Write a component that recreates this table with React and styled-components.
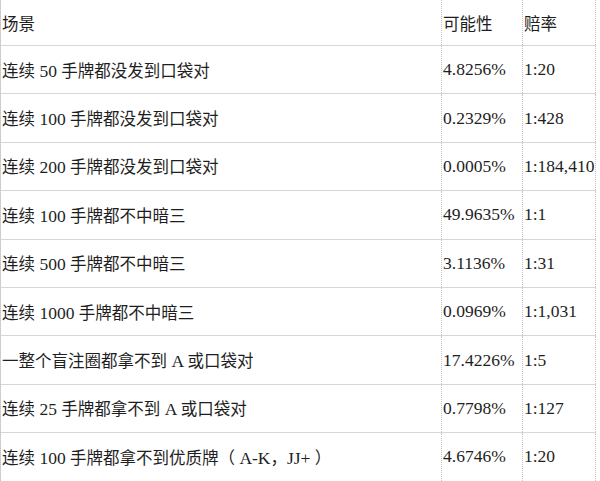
import styled, { createGlobalStyle } from 'styled-components'
import { Fragment } from 'react'

const Global = createGlobalStyle`
  html, body { margin: 0; padding: 0; background: #fff; }
  body { width: 600px; height: 481px; overflow: hidden; }
`

const Table = styled.div`
  display: grid;
  grid-template-columns: 441px 81px 73px;
  grid-template-rows: 45px repeat(9, 47.4px);
  row-gap: 1px;
  background: #d6d6d6;
  border-left: 1px dotted #c4c4c4;
  width: 596px;
  box-sizing: border-box;
  font-family: "Liberation Serif", "Noto Sans CJK SC", serif;
  font-size: 17.5px;
  color: #1e1e1e;
`

const Cell = styled.div`
  background: #fff;
  display: flex;
  align-items: center;
  padding-left: 1px;
  white-space: pre;
  border-right: 1px dotted #c4c4c4;
`

const Text = styled.span`
  white-space: pre;
`

const Cjk = styled.span`
  font-family: "Noto Sans CJK SC", sans-serif;
  font-size: 16.5px;
`

const rows = [
  ['连续 50 手牌都没发到口袋对', '4.8256%', '1:20'],
  ['连续 100 手牌都没发到口袋对', '0.2329%', '1:428'],
  ['连续 200 手牌都没发到口袋对', '0.0005%', '1:184,410'],
  ['连续 100 手牌都不中暗三', '49.9635%', '1:1'],
  ['连续 500 手牌都不中暗三', '3.1136%', '1:31'],
  ['连续 1000 手牌都不中暗三', '0.0969%', '1:1,031'],
  ['一整个盲注圈都拿不到 A 或口袋对', '17.4226%', '1:5'],
  ['连续 25 手牌都拿不到 A 或口袋对', '0.7798%', '1:127'],
  ['连续 100 手牌都拿不到优质牌（ A-K，JJ+ ）', '4.6746%', '1:20'],
]

const CJK_RE = /([\u3000-\u9fff\uff00-\uffef]+)/

// CJK runs in the sans CJK face, latin runs stay in the serif
function Mixed({ text }) {
  return (
    <Text>
      {text.split(CJK_RE).map((s, i) =>
        i % 2 ? <Cjk key={i}>{s}</Cjk> : s
      )}
    </Text>
  )
}

export default function App() {
  return (
    <>
      <Global />
      <Table>
        <Cell><Cjk>场景</Cjk></Cell>
        <Cell><Cjk>可能性</Cjk></Cell>
        <Cell><Cjk>赔率</Cjk></Cell>
        {rows.map((r, i) => (
          <Fragment key={i}>
            <Cell><Mixed text={r[0]} /></Cell>
            <Cell>{r[1]}</Cell>
            <Cell>{r[2]}</Cell>
          </Fragment>
        ))}
      </Table>
    </>
  )
}
